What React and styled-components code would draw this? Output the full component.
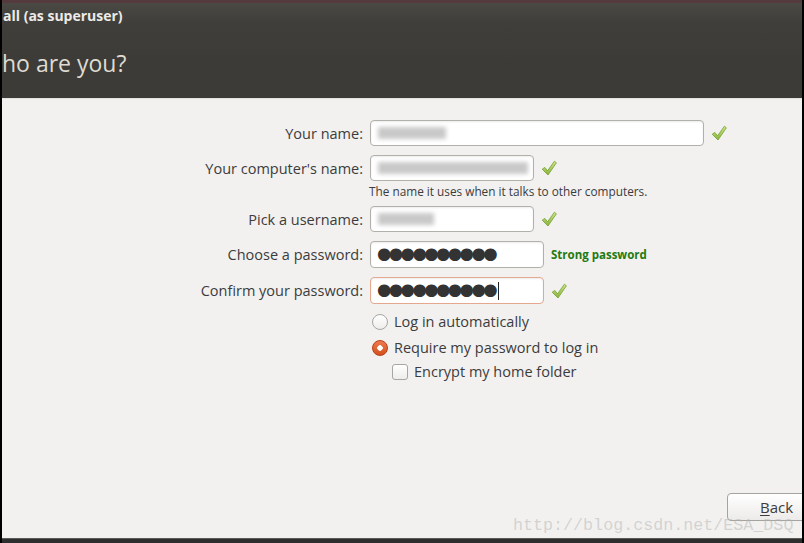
import React from 'react'
import styled, { createGlobalStyle } from 'styled-components'

const GlobalStyle = createGlobalStyle`
  html, body {
    margin: 0;
    padding: 0;
    background: #000;
  }
  body {
    font-family: "Open Sans", "DejaVu Sans", sans-serif;
  }
`

function Check() {
  return (
    <CheckIcon viewBox="0 0 16 16">
      <defs>
        <linearGradient id="chk" x1="0" y1="0" x2="0" y2="1">
          <stop offset="0" stopColor="#cfe58f" />
          <stop offset="1" stopColor="#86b33a" />
        </linearGradient>
      </defs>
      <path
        d="M1.2 9.2 L3.8 7.4 L6.6 10.8 L13.4 1.2 L15.4 2.8 L7 15 Z"
        fill="url(#chk)"
        stroke="#74a02e"
        strokeWidth="0.8"
        strokeLinejoin="round"
      />
    </CheckIcon>
  )
}

function Field({ label, width, invalid, children, after }) {
  return (
    <Row>
      <Label>{label}</Label>
      <Input width={width} invalid={invalid}>{children}</Input>
      {after}
    </Row>
  )
}

function App() {
  return (
    <>
      <GlobalStyle />
      <Window>
        <Header>
          <Subtitle>all (as superuser)</Subtitle>
          <Title>ho are you?</Title>
        </Header>
        <Body>
          <Form>
            <Field label="Your name:" width={334} after={<Check />}>
              <Blur w={68} />
            </Field>
            <Spacer h={9} />
            <Field label="Your computer's name:" width={164} after={<Check />}>
              <Blur w={150} />
            </Field>
            <Hint>The name it uses when it talks to other computers.</Hint>
            <Spacer h={7} />
            <Field label="Pick a username:" width={164} after={<Check />}>
              <Blur w={56} />
            </Field>
            <Spacer h={9} />
            <Field label="Choose a password:" width={174} after={<Strength>Strong password</Strength>}>
              <Dots>●●●●●●●●●●</Dots>
            </Field>
            <Spacer h={9} />
            <Field label="Confirm your password:" width={174} invalid after={<Check />}>
              <Dots>●●●●●●●●●●</Dots>
              <Caret />
            </Field>
            <Options>
              <Option>
                <Radio />
                Log in automatically
              </Option>
              <Option>
                <Radio checked />
                Require my password to log in
              </Option>
              <Option indent>
                <Box />
                Encrypt my home folder
              </Option>
            </Options>
          </Form>
          <Footer>
            <BackButton><u>B</u>ack</BackButton>
          </Footer>
          <Watermark>http://blog.csdn.net/ESA_DSQ</Watermark>
        </Body>
        <BottomEdge />
      </Window>
    </>
  )
}

export default App

const Window = styled.div`
  width: 800px;
  height: 543px;
  margin: 0 2px;
  display: flex;
  flex-direction: column;
  overflow: hidden;
  background: #f2f1f0;
`
const Header = styled.div`
  height: 95px;
  border-top: 3px solid #54393d;
  background: linear-gradient(#4b4944 0px, #403e3a 20px, #3c3b37 60px);
  display: flex;
  flex-direction: column;
  padding-left: 1px;
`
const Subtitle = styled.div`
  color: #ecebe8;
  font-size: 14px;
  font-weight: 700;
  margin-top: 4px;
  line-height: 17px;
`
const Title = styled.div`
  color: #dfdbd2;
  font-size: 23px;
  margin-top: 25px;
  line-height: 29px;
  margin-left: -1px;
`
const Body = styled.div`
  position: relative;
  flex: 1;
  display: flex;
  flex-direction: column;
  padding-top: 21px;
  border-top: 1px solid #e4e2df;
`
const Form = styled.div`
  display: flex;
  flex-direction: column;
`
const Row = styled.div`
  display: flex;
  align-items: center;
  gap: 7px;
`
const Spacer = styled.div`
  height: ${p => p.h}px;
`
const Label = styled.div`
  width: 361px;
  text-align: right;
  font-size: 14.5px;
  color: #3c3c3c;
`
const Input = styled.div`
  box-sizing: border-box;
  width: ${p => p.width}px;
  height: ${p => (p.width === 174 ? 27 : 26)}px;
  border: 1px solid ${p => (p.invalid ? '#e3a88e' : '#b2b0ab')};
  border-radius: 4px;
  background: #fff;
  box-shadow: inset 0 1px 2px rgba(0, 0, 0, 0.08);
  display: flex;
  align-items: center;
  padding-left: 7px;
`
const Blur = styled.span`
  display: block;
  width: ${p => p.w}px;
  height: 12px;
  background: #c9c9c9;
  filter: blur(2px);
`
const Dots = styled.span`
  font-family: "DejaVu Sans", sans-serif;
  font-size: 16.5px;
  letter-spacing: -2.6px;
  margin-left: -1px;
  color: #333;
  line-height: 1;
`
const Caret = styled.span`
  width: 1px;
  height: 18px;
  margin-left: 3px;
  background: #222;
`
const CheckIcon = styled.svg`
  width: 16px;
  height: 16px;
  flex: none;
`
const Hint = styled.div`
  margin: 3px 0 0 367px;
  font-size: 11.8px;
  line-height: 15px;
  color: #3c3c3c;
`
const Strength = styled.span`
  font-size: 11.5px;
  font-weight: 700;
  color: #237a11;
`
const Options = styled.div`
  display: flex;
  flex-direction: column;
  margin: 9px 0 0 370px;
`
const Option = styled.label`
  display: flex;
  align-items: center;
  gap: 6px;
  height: 17px;
  margin-bottom: ${p => (p.indent ? 0 : 9)}px;
  margin-top: ${p => (p.indent ? -2 : 0)}px;
  font-size: 14.5px;
  color: #3c3c3c;
  padding-left: ${p => (p.indent ? 20 : 0)}px;
`
const Radio = styled.span`
  box-sizing: border-box;
  width: 16px;
  height: 16px;
  border-radius: 50%;
  flex: none;
  border: 1px solid ${p => (p.checked ? '#b5401a' : '#a8a6a2')};
  background: ${p =>
    p.checked
      ? 'radial-gradient(circle, #fff 0 2.5px, transparent 3px), linear-gradient(#ee7a4e, #d4501c)'
      : 'linear-gradient(#ffffff, #eeedeb)'};
`
const Box = styled.span`
  box-sizing: border-box;
  width: 16px;
  height: 16px;
  border-radius: 3px;
  flex: none;
  border: 1px solid #a8a6a2;
  background: linear-gradient(#ffffff, #eeedeb);
`
const Footer = styled.div`
  margin-top: auto;
  display: flex;
  justify-content: flex-end;
  padding-bottom: 17px;
`
const BackButton = styled.button`
  box-sizing: border-box;
  width: 80px;
  height: 28px;
  margin-right: -5px;
  padding: 0 0 0 32px;
  text-align: left;
  border: 1px solid #a5a39f;
  border-radius: 4px;
  background: linear-gradient(#ffffff, #ecebe9);
  font-family: "Open Sans", "DejaVu Sans", sans-serif;
  font-size: 15px;
  color: #3c3c3c;
  u {
    text-decoration-thickness: 1px;
    text-underline-offset: 2px;
  }
`
const Watermark = styled.div`
  position: absolute;
  left: 511px;
  bottom: 3px;
  font-family: "Liberation Mono", monospace;
  font-size: 16.7px;
  color: rgba(180, 180, 180, 0.5);
  pointer-events: none;
`
const BottomEdge = styled.div`
  height: 4px;
  background: #2e2e2e;
  border-top: 1px solid #5a5a5a;
`
